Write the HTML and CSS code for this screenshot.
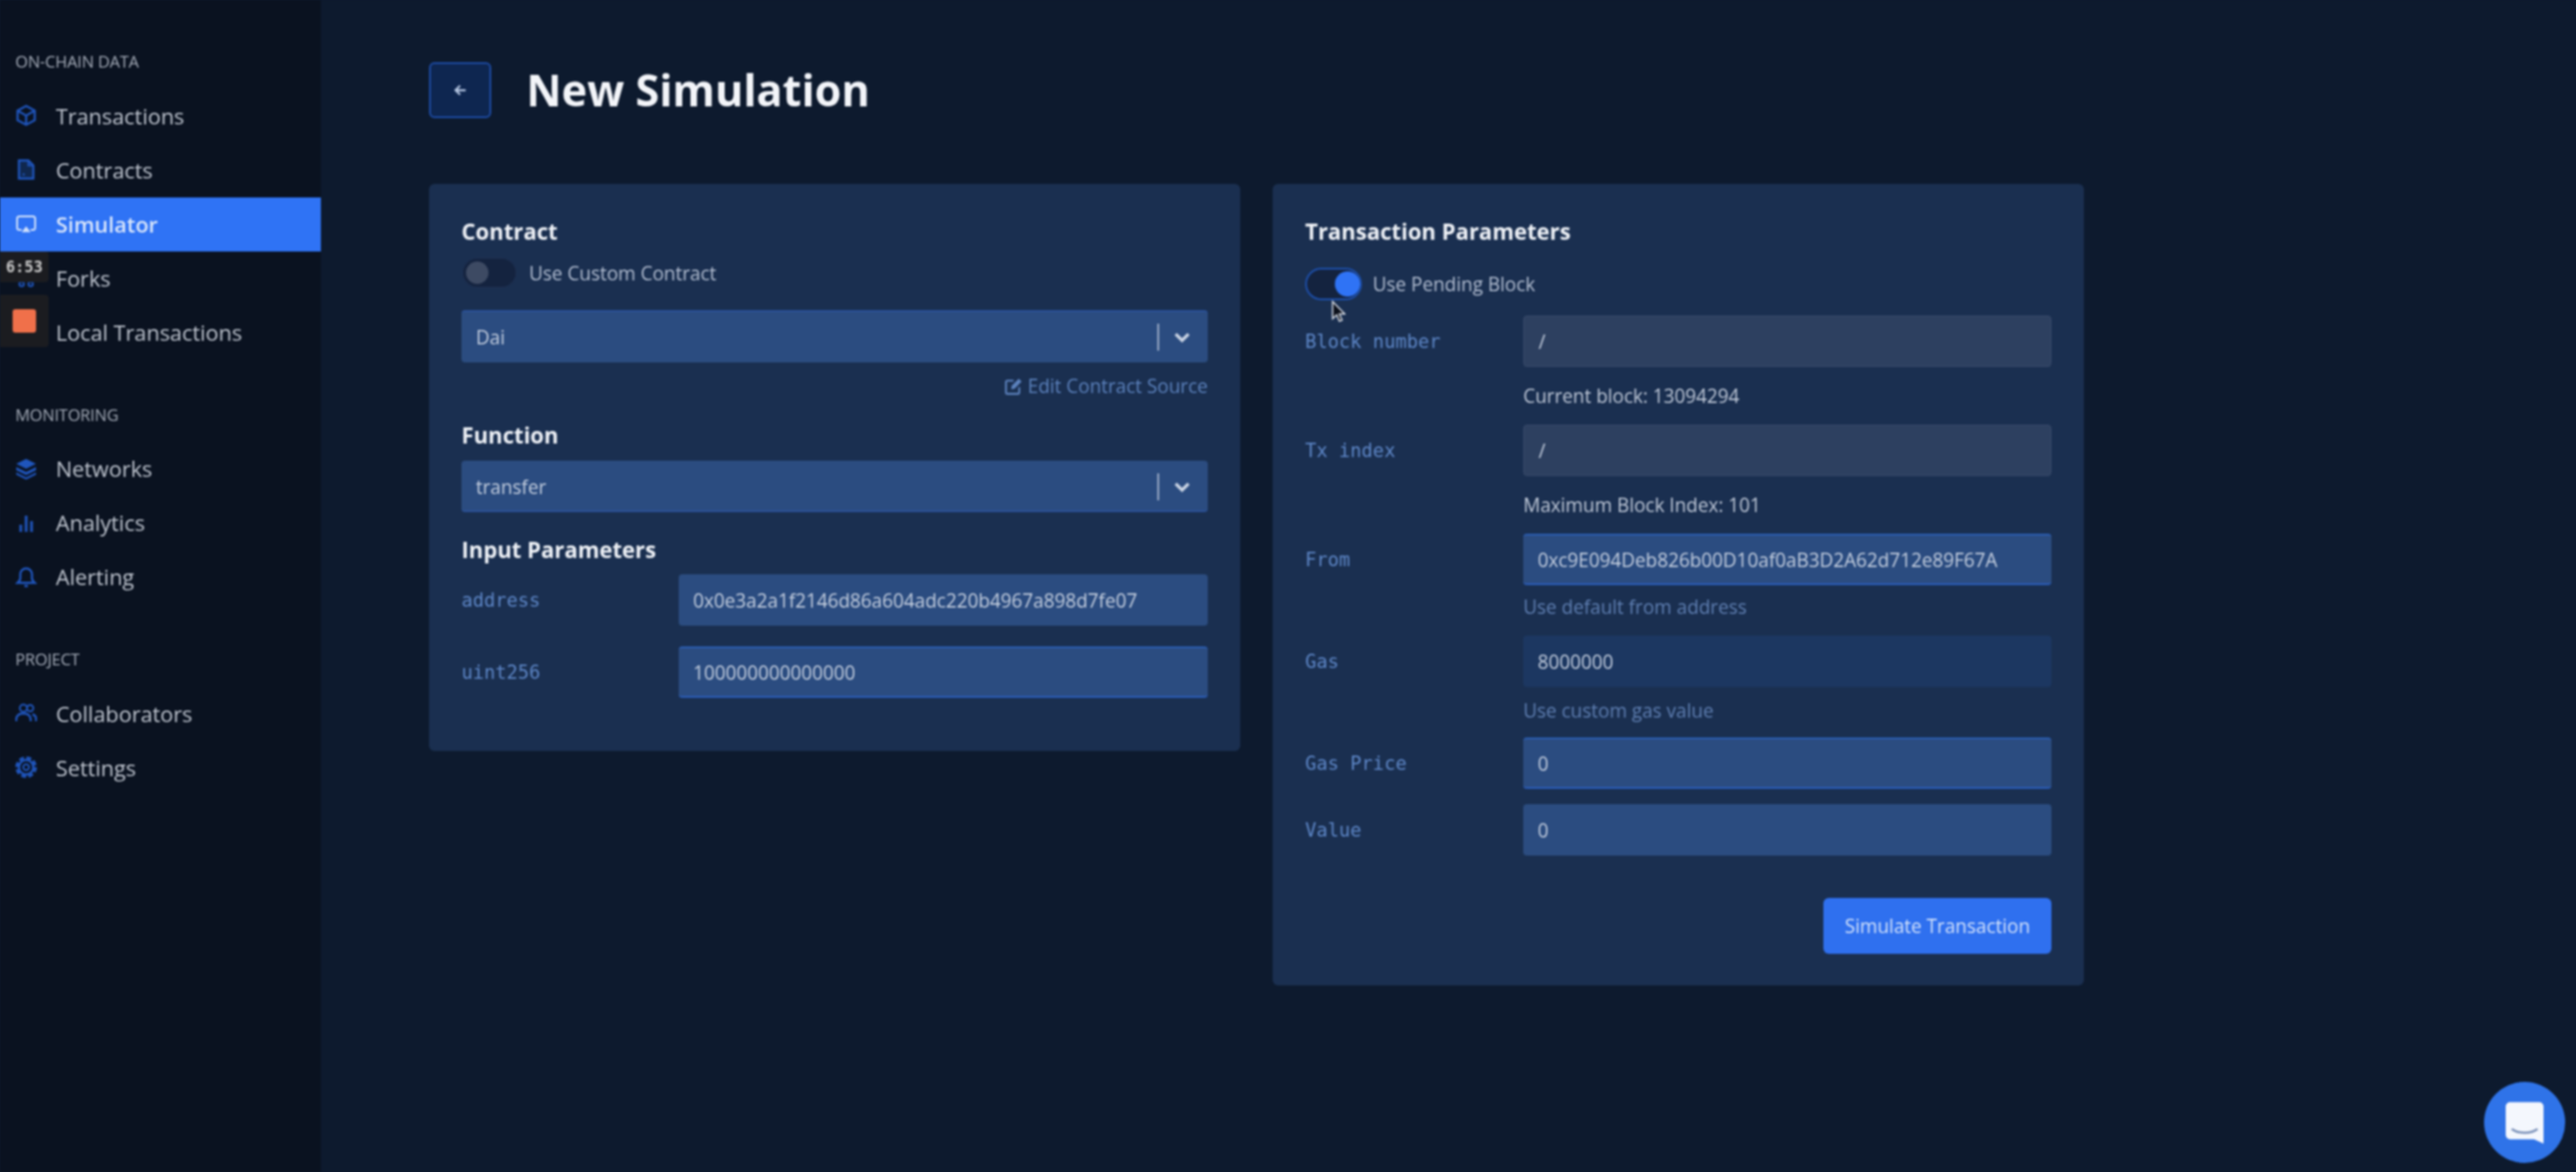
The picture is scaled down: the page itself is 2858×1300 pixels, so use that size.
FILE: index.html
```html
<!DOCTYPE html>
<html lang="en">
<head>
<meta charset="utf-8">
<title>New Simulation</title>
<link rel="stylesheet" href="styles.css">
</head>
<body>
<div class="app">
  <aside class="sidebar">
    <section class="nav-section">
      <h3 class="nav-title">ON-CHAIN DATA</h3>
      <a class="nav-item"><svg class="nav-icon" viewBox="0 0 24 24"><path class="thick" d="M12 1.500l9.500 5.200v10.600L12 22.500l-9.500-5.200V6.700zM3 7l9 5.200L21 7M12 12.200V22"/></svg>Transactions</a>
      <a class="nav-item"><svg class="nav-icon" viewBox="0 0 24 24"><path class="tint thick" d="M4 2h10.500L20 7.500V22H4z"/><path d="M14.500 2v5.500H20M8 17.500h2.500"/></svg>Contracts</a>
      <a class="nav-item active"><svg class="nav-icon" viewBox="0 0 24 24"><path d="M7 19H4.500a2.500 2.500 0 0 1-2.500-2.500v-10A2.500 2.500 0 0 1 4.500 4h15A2.500 2.500 0 0 1 22 6.500v10a2.500 2.500 0 0 1-2.500 2.500H17"/><path class="solid" d="M12 15l5 6.500H7z"/></svg>Simulator</a>
      <a class="nav-item"><svg class="nav-icon" viewBox="0 0 24 24"><circle cx="12" cy="5" r="2.500"/><circle cx="7" cy="19" r="2.500"/><circle cx="17" cy="19" r="2.500"/><path d="M12 7.500V10M7 16.500V13a3 3 0 0 1 3-3h4a3 3 0 0 1 3 3v3.500"/></svg>Forks</a>
      <a class="nav-item"><svg class="nav-icon" viewBox="0 0 24 24"><path d="M4 4h16v16H4z"/></svg>Local Transactions</a>
    </section>
    <section class="nav-section">
      <h3 class="nav-title">MONITORING</h3>
      <a class="nav-item"><svg class="nav-icon" viewBox="0 0 24 24"><path class="solid" d="M12 1l11 5.500L12 12 1 6.500z"/><path class="solid" d="M1 10l11 5.500L23 10v3.500L12 19 1 13.500z"/><path class="solid" d="M1 16l11 5.500L23 16v2.500L12 24 1 18.500z"/></svg>Networks</a>
      <a class="nav-item"><svg class="nav-icon" viewBox="0 0 24 24"><path class="solid" d="M4.500 14h3v8h-3zM10.500 4h3v18h-3zM16.500 10h3v12h-3z"/></svg>Analytics</a>
      <a class="nav-item"><svg class="nav-icon" viewBox="0 0 24 24"><path class="thick" d="M2.500 18.500c2-1.500 3-3 3-5.500V9a6.500 6.500 0 0 1 13 0v4c0 2.500 1 4 3 5.500zM10 22h4"/></svg>Alerting</a>
    </section>
    <section class="nav-section">
      <h3 class="nav-title">PROJECT</h3>
      <a class="nav-item"><svg class="nav-icon" viewBox="0 0 24 24"><circle cx="9" cy="6.500" r="4"/><circle cx="16.500" cy="6.500" r="3.500"/><path class="thick" d="M1 21v-2a6.500 6.500 0 0 1 6.500-6.500h3A6.500 6.500 0 0 1 17 19v2M19 13.500a5 5 0 0 1 4 5V21"/></svg>Collaborators</a>
      <a class="nav-item"><svg class="nav-icon" viewBox="0 0 24 24"><circle class="gear-ring" cx="12" cy="12" r="8"/><circle class="gear-teeth" cx="12" cy="12" r="10.500"/><circle cx="12" cy="12" r="3.200"/></svg>Settings</a>
    </section>
  </aside>

  <main class="main">
    <header class="page-head">
      <button class="back-btn" type="button" aria-label="Back"><svg class="back-icon" viewBox="0 0 16 16"><path d="M13 8H3.500M7.500 3.500L3 8l4.500 4.500"/></svg></button>
      <h1 class="page-title">New Simulation</h1>
    </header>

    <div class="cards">
      <section class="card card-left">
        <h2 class="card-title">Contract</h2>
        <div class="switch-row switch-row-custom">
          <span class="switch"><span class="knob"></span></span>
          <span class="switch-label">Use Custom Contract</span>
        </div>
        <div class="select select-first">
          <span>Dai</span>
          <span class="select-tail"><i class="select-bar"></i><svg class="chevron" viewBox="0 0 16 10"><path d="M2 2l6 6 6-6"/></svg></span>
        </div>
        <a class="edit-link"><svg class="edit-icon" viewBox="0 0 20 20"><path d="M16 11v5.500a1.500 1.500 0 0 1-1.500 1.500h-11A1.500 1.500 0 0 1 2 16.500v-11A1.500 1.500 0 0 1 3.500 4H10"/><path class="fill" d="M8 9.500L15.500 2l3 3L11 12.500 7.500 13z"/></svg>Edit Contract Source</a>
        <h2 class="card-title title-function">Function</h2>
        <div class="select select-second select-lined">
          <span>transfer</span>
          <span class="select-tail"><i class="select-bar"></i><svg class="chevron" viewBox="0 0 16 10"><path d="M2 2l6 6 6-6"/></svg></span>
        </div>
        <h2 class="card-title title-input">Input Parameters</h2>
        <div class="param-row">
          <label class="field-label">address</label>
          <div class="input">0x0e3a2a1f2146d86a604adc220b4967a898d7fe07</div>
        </div>
        <div class="param-row param-row-next">
          <label class="field-label">uint256</label>
          <div class="input input-focus">100000000000000</div>
        </div>
      </section>

      <section class="card card-right">
        <h2 class="card-title">Transaction Parameters</h2>
        <div class="switch-row switch-row-pending">
          <span class="switch switch-on"><span class="knob"></span></span>
          <span class="switch-label">Use Pending Block</span>
        </div>
        <div class="tx-row tx-first">
          <label class="field-label">Block number</label>
          <div class="input input-disabled">/</div>
        </div>
        <p class="hint">Current block: 13094294</p>
        <div class="tx-row">
          <label class="field-label">Tx index</label>
          <div class="input input-disabled">/</div>
        </div>
        <p class="hint">Maximum Block Index: 101</p>
        <div class="tx-row">
          <label class="field-label">From</label>
          <div class="input input-focus">0xc9E094Deb826b00D10af0aB3D2A62d712e89F67A</div>
        </div>
        <p class="hint hint-link hint-from">Use default from address</p>
        <div class="tx-row">
          <label class="field-label">Gas</label>
          <div class="input input-dark">8000000</div>
        </div>
        <p class="hint hint-link hint-gas">Use custom gas value</p>
        <div class="tx-row tx-price">
          <label class="field-label">Gas Price</label>
          <div class="input input-focus">0</div>
        </div>
        <div class="tx-row tx-value">
          <label class="field-label">Value</label>
          <div class="input">0</div>
        </div>
        <div class="actions">
          <button class="primary-btn" type="button">Simulate Transaction</button>
        </div>
      </section>
    </div>
  </main>
</div>

<div class="video-time">6:53</div>
<div class="video-stop"><span class="stop-square"></span></div>
<svg class="cursor" viewBox="0 0 16 26"><path d="M1.500 1.500v19l4.500-4.200 3 7 3-1.300-3-6.800h6z"/></svg>
<div class="chat-bubble"><svg class="chat-icon" viewBox="0 0 44 48"><path class="chat-body" d="M5 0h34a5 5 0 0 1 5 5v43l-11-5H5a5 5 0 0 1-5-5V5a5 5 0 0 1 5-5z"/><path class="chat-smile" d="M7 31c8 6 22 6 30 0"/></svg></div>
</body>
</html>
```

FILE: styles.css
```css
* { box-sizing: border-box; }
html, body { margin: 0; height: 100%; background: #0d1a2e; overflow: hidden; }
body { font-family: "Open Sans", "Liberation Sans", sans-serif; color: #c5ccd8; filter: blur(0.8px); }

.app { display: flex; height: 1300px; margin-left: -6px; }

/* Sidebar: runs 6px past the window edge so the soft filter leaves no seam */
.sidebar { flex: 0 0 362px; background: #0a1220; padding: 56px 0 0 6px; }
.nav-section + .nav-section { margin-top: 48.500px; }
.nav-title { margin: 0 0 19px; padding-left: 17px; font-size: 18px; line-height: 24px; font-weight: 400; color: #a6adb9; letter-spacing: -0.1px; }
.nav-item { display: flex; align-items: center; gap: 21px; height: 60px; padding: 0 0 2px 17px; font-size: 24px; color: #bfc5cf; }
.nav-icon { width: 24px; height: 24px; fill: none; stroke: #1f55bc; stroke-width: 2; flex: none; }
.nav-icon .solid { fill: #1f55bc; stroke: none; }
.nav-icon .thick { stroke-width: 2.400; }
.nav-icon .tint { fill: #10284f; }
.nav-icon .gear-ring { stroke-width: 2.600; }
.nav-icon .gear-teeth { stroke-width: 3; stroke-dasharray: 5.500 2.750; }
.nav-item.active { margin-left: -6px; padding-left: 23px; background: #2f73f5; color: #dbe7fb; font-weight: 600; }
.nav-item.active .nav-icon { stroke: #d3e2fb; }
.nav-item.active .solid { fill: #d3e2fb; }

/* Main */
.main { flex: 1; padding: 69px 0 0 120px; }
.page-head { display: flex; align-items: center; gap: 41px; height: 62px; }
.back-btn { width: 69px; height: 62px; padding: 0; background: #0e2650; border: 2px solid #1d4ba4; border-radius: 6px; display: flex; align-items: center; justify-content: center; }
.back-icon { width: 18px; height: 18px; fill: none; stroke: #b7c8e4; stroke-width: 2; }
.page-title { margin: 0 0 0 -2px; font-size: 48px; line-height: 62px; font-weight: 700; color: #f3f5f9; }

.cards { display: flex; gap: 36px; align-items: flex-start; margin-top: 73px; }
.card { background: #1a2f50; border-radius: 6px; }
.card-left { width: 900px; padding: 37px 36px 59px; }
.card-right { width: 900px; padding: 37px 36px 35px; }
.card-title { margin: 0; font-size: 24.500px; line-height: 32px; font-weight: 700; color: #eef1f6; }
.title-function { margin-top: 27px; }
.title-input { margin-top: 26px; }

/* Switch */
.switch-row { display: flex; align-items: center; gap: 13px; }
.switch-row-custom { margin-top: 12px; height: 35px; }
.switch-row-pending { margin-top: 24px; height: 36px; gap: 12px; }
.switch-label { font-size: 21px; color: #b4bfd2; }
.switch { position: relative; display: block; width: 62px; height: 35px; border-radius: 18px; background: #14233f; border: 2px solid #1c2f50; }
.switch .knob { position: absolute; left: 3px; top: 3px; width: 25px; height: 25px; border-radius: 50%; background: #3d4a63; }
.switch-on { width: 63px; height: 36px; border-color: #1d4faa; }
.switch-on .knob { left: 31px; top: 2px; width: 28px; height: 28px; background: #2f73f5; }

/* Select */
.select { display: flex; align-items: center; justify-content: space-between; height: 58px; padding: 0 19px 0 16px; background: #2b4c80; border-top: 2px solid #2a5198; border-radius: 4px; font-size: 21px; color: #c5cfdf; }
.select-first { margin-top: 24px; }
.select-second { margin-top: 12px; height: 57px; }
.select-lined { border-top-color: #2b4c80; border-bottom: 2px solid #2a5198; }
.select-tail { display: flex; align-items: center; gap: 16px; }
.select-bar { display: block; width: 2px; height: 30px; background: #9aabc6; }
.chevron { width: 19px; height: 12px; fill: none; stroke: #c9d3e3; stroke-width: 3; }

.edit-link { display: flex; align-items: center; justify-content: flex-end; gap: 5px; margin-top: 14px; height: 24px; font-size: 21px; color: #5c82bd; }
.edit-icon { width: 21px; height: 21px; fill: none; stroke: #5c82bd; stroke-width: 2; }
.edit-icon .fill { fill: #5c82bd; stroke: none; }

/* Fields */
.field-label { font-family: "DejaVu Sans Mono", "Liberation Mono", monospace; font-size: 20.800px; color: #5d86c6; }
.input { display: flex; align-items: center; height: 57px; padding: 0 16px; background: #2b4c80; border-radius: 4px; font-size: 21px; color: #c5cfdf; white-space: nowrap; }
.input-focus { border-top: 2px solid #2a5cb0; border-bottom: 2px solid #2a5cb8; }
.input-disabled { background: #2d4060; border: 1px solid #38496a; }
.input-dark { background: #1c3761; }

.param-row { display: grid; grid-template-columns: 241px 1fr; align-items: center; margin-top: 11px; }
.param-row-next { margin-top: 23px; }

.tx-row { display: grid; grid-template-columns: 242px 1fr; align-items: center; margin-top: 20px; }
.tx-first { margin-top: 17px; }
.tx-price { margin-top: 18px; }
.tx-value { margin-top: 17px; }
.hint { margin: 20px 0 0 242px; font-size: 21px; line-height: 24px; color: #c0c9d8; }
.hint-link { color: #5f7fb2; }
.hint-from { margin-top: 12px; }
.hint-gas { margin-top: 14px; }

.actions { display: flex; justify-content: flex-end; margin-top: 47px; }
.primary-btn { width: 253px; height: 62px; padding: 0; border: 0; border-radius: 6px; background: #2f70ef; font: 400 21px "Open Sans", sans-serif; color: #d3e2fb; }

/* Overlays */
.video-time { position: absolute; left: -6px; top: 279px; width: 60px; height: 34px; border-radius: 0 4px 4px 0; padding-left: 6px; background: #1b1c20; font-family: "DejaVu Sans Mono", monospace; font-weight: 700; font-size: 17px; line-height: 34px; text-align: center; color: #c9c9c9; }
.video-stop { position: absolute; left: -6px; top: 327px; width: 60px; height: 58px; padding-left: 6px; background: #1b1c20; border-radius: 0 4px 4px 0; display: flex; align-items: center; justify-content: center; }
.stop-square { display: block; width: 26px; height: 26px; border-radius: 3px; background: #f0704a; }
.cursor { position: absolute; left: 1477px; top: 333px; width: 16px; height: 26px; fill: #0a0f1a; stroke: #d8dde6; stroke-width: 1.500; }
.chat-bubble { position: absolute; left: 2756px; top: 1200px; width: 90px; height: 90px; border-radius: 50%; background: #2f73e8; display: flex; align-items: center; justify-content: center; }
.chat-icon { width: 42px; height: 47px; }
.chat-body { fill: #f4f7fd; }
.chat-smile { fill: none; stroke: #7a90b8; stroke-width: 2.500; }
```
